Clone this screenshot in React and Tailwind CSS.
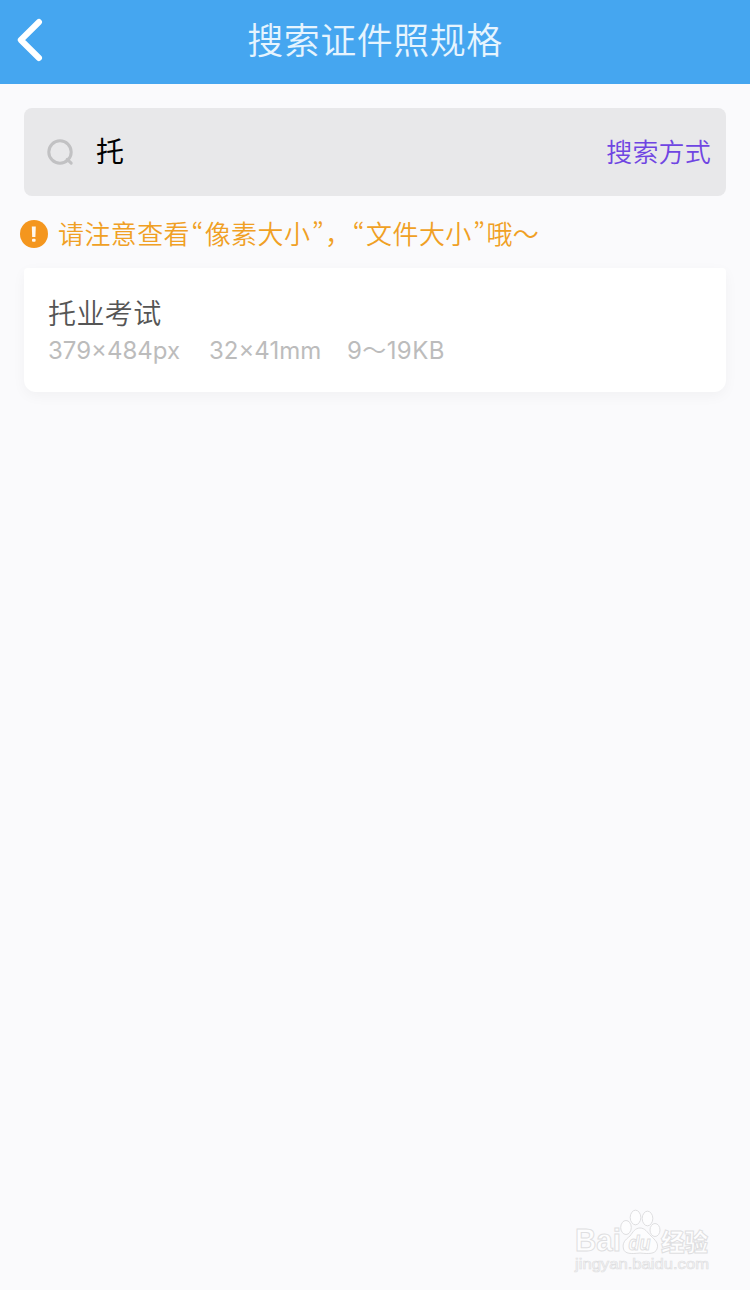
const results = [
  { name: '托业考试', pixels: '379×484px', size: '32×41mm', file: ['9', '19KB'] }
];

function BackIcon() {
  return (
    <svg className="w-7 h-11" viewBox="0 0 28 44" fill="none" stroke="white" strokeWidth="6" strokeLinecap="round" strokeLinejoin="round">
      <path d="M24 4 L5.8 22 L24 40" />
    </svg>
  );
}

function SearchIcon() {
  return (
    <svg className="w-7 h-7" viewBox="0 0 28 28" fill="none" stroke="#c1c1c3" strokeWidth="3" strokeLinecap="round">
      <circle cx="14" cy="14" r="11.2" />
      <path d="M21.2 21.4 L25.2 25.2" />
    </svg>
  );
}

function NoticeIcon() {
  return (
    <svg className="w-7 h-7" viewBox="0 0 28 28">
      <circle cx="14" cy="14" r="14" fill="#f4961e" />
      <path d="M11.8 6.5 H15.8 L15.4 17 H12.2 Z" fill="#fff8ee" />
      <rect x="12" y="18.8" width="3.6" height="3" rx="1" fill="#fff8ee" />
    </svg>
  );
}

function Quote({ children }) {
  return (
    <span className="inline-flex w-[14.7px] justify-center tracking-normal [font-feature-settings:'pwid']">{children}</span>
  );
}

function Watermark() {
  return (
    <svg className="w-[150px] h-[76px]" viewBox="0 0 150 76" fill="#fdfdfe" stroke="#dfdfe1" strokeWidth="1">
      <g fontFamily="'Liberation Sans', sans-serif" fontWeight="bold">
        <text x="5" y="48" fontSize="31" textLength="46" lengthAdjust="spacingAndGlyphs">Bai</text>
        <ellipse cx="56" cy="24.5" rx="5.3" ry="7" />
        <ellipse cx="65.5" cy="14.5" rx="5.3" ry="7.3" />
        <ellipse cx="77.5" cy="15.5" rx="5.3" ry="7.3" />
        <ellipse cx="85" cy="27" rx="5" ry="6.5" />
        <path d="M70 25 C75 25 77 29 81 33 C85 37 89 40 87 46 C85 51 79 51 70 50 C61 51 55 51 53.5 46 C52 40 55 37 60 33 C63 29 65 25 70 25 Z" />
        <text x="58.5" y="47" fontSize="20" textLength="22" lengthAdjust="spacingAndGlyphs" fontStyle="italic">du</text>
      </g>
      <text x="91" y="48" fontSize="24" fontWeight="900" textLength="47" lengthAdjust="spacingAndGlyphs" fontFamily="'Noto Sans CJK SC', sans-serif">经验</text>
      <text x="5" y="66" fontSize="15" strokeWidth="0.7" textLength="134" lengthAdjust="spacingAndGlyphs" fontFamily="'Liberation Sans', sans-serif">jingyan.baidu.com</text>
    </svg>
  );
}

export default function App() {
  return (
    <div className="w-[750px] h-[1290px] flex flex-col bg-[#fafafc] overflow-hidden font-['Noto_Sans_CJK_SC',sans-serif]">
      {/* Header */}
      <header className="h-[84px] shrink-0 grid grid-cols-[1fr_auto_1fr] items-center bg-[#45a6f0] px-[15px] pb-1">
        <BackIcon />
        <h1 className="pb-1 text-[36px] leading-[52px] font-[350] tracking-[0.5px] text-[#e6f4fe]">搜索证件照规格</h1>
      </header>

      {/* Search bar */}
      <div className="mt-6 mx-6 h-[88px] shrink-0 flex items-center rounded-lg bg-[#e8e8ea] pl-[22px] pr-[15px]">
        <SearchIcon />
        <span className="ml-[22px] pb-[4px] flex-1 text-[28px] leading-10 text-black">托</span>
        <button className="pb-0.5 text-[26px] leading-10 tracking-[0.2px] font-[350] text-[#6f45e2]">搜索方式</button>
      </div>

      {/* Notice */}
      <div className="mt-[18px] h-10 shrink-0 flex items-center gap-[10px] pl-5">
        <NoticeIcon />
        <p className="pb-0.5 text-[26px] leading-10 font-[350] tracking-[0.4px] text-[#f0a024] whitespace-nowrap">
          请注意查看<Quote>“</Quote>像素大小<Quote>”</Quote>，<Quote>“</Quote>文件大小<Quote>”</Quote>哦～
        </p>
      </div>

      {/* Results */}
      <main className="mt-[14px] px-6 flex-1">
        {results.map((item) => (
          <section key={item.name} className="h-[124px] rounded-t-sm rounded-b-xl bg-white px-6 pt-6 shadow-[0_4px_14px_rgba(0,0,0,0.04)]">
            <h2 className="text-[28px] leading-[40px] font-[350] tracking-[0.4px] text-[#555555]">{item.name}</h2>
            <div className="pt-px flex text-[24px] leading-9 text-[#bcbcbc] font-['Inter','Noto_Sans_CJK_SC',sans-serif] whitespace-nowrap">
              <span className="w-[161px]">{item.pixels}</span>
              <span className="w-[138px]">{item.size}</span>
              <span className="tracking-[0.4px]">{item.file.join('～')}</span>
            </div>
          </section>
        ))}
      </main>

      <footer className="flex justify-end pr-[30px] pb-[11px]">
        <Watermark />
      </footer>
    </div>
  );
}
